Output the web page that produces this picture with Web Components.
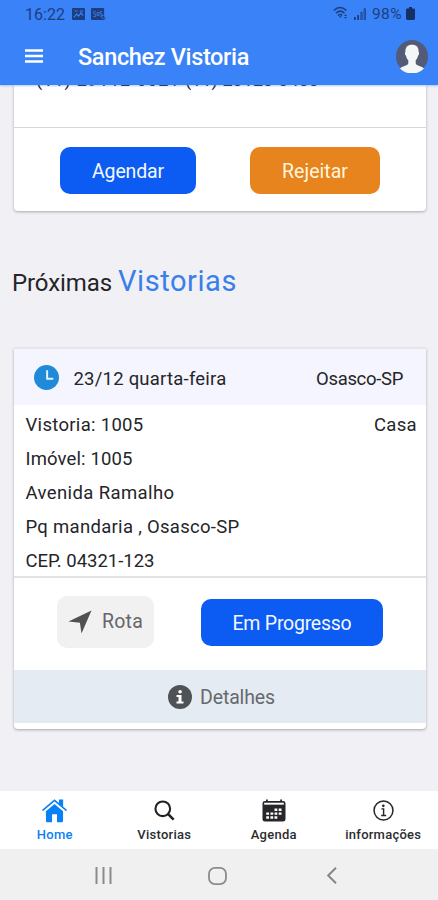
<!DOCTYPE html>
<html lang="pt-BR">
<head>
<meta charset="utf-8">
<title>Sanchez Vistoria</title>
<style>
html,body{margin:0;padding:0}
body{width:438px;height:900px;overflow:hidden;font-family:Roboto,"Liberation Sans",sans-serif;color:#252528;background:#f1f0f5}
</style>
</head>
<body>
<vistoria-app></vistoria-app>
<script>
const define = (name, html, after) => {
  const t = document.createElement('template');
  t.innerHTML = html;
  customElements.define(name, class extends HTMLElement {
    connectedCallback() {
      if (this.shadowRoot) return;
      this.attachShadow({ mode: 'open' }).append(t.content.cloneNode(true));
      if (after) after(this, this.shadowRoot);
    }
  });
};

/* A single line of text tracked out to a given width */
define('fit-text', `<style>
:host{display:block;white-space:pre;flex:none}
span{display:inline-block}
</style><span><slot></slot></span>`, (el, root) => {
  const s = root.querySelector('span');
  const w = parseFloat(el.getAttribute('w'));
  el.style.fontSize = el.getAttribute('size') + 'px';
  const natural = s.getBoundingClientRect().width;
  if (natural && w) s.style.letterSpacing = ((w - natural) / el.textContent.length).toFixed(3) + 'px';
  el.style.width = w + 'px';
});

const icons = {
  image: ['0 0 14 12', '<path fill="currentColor" d="M1 0h12q1 0 1 1v10q0 1-1 1H1q-1 0-1-1V1q0-1 1-1z"/><path d="M2 9.3l3-3.3 2.2 2 2.5-3.2L12 7.500M3 3h3M8.500 3H12" fill="none" stroke="#3982f7" stroke-width="1.200"/>'],
  sos: ['0 0 16 12', '<path fill="currentColor" d="M1 0h12q1 0 1 1v6.500l1.500 2.500-1.500 2H1q-1 0-1-1V1q0-1 1-1z"/><path d="M5 3.500H3V6h2v2.500H2.500M6.500 4.500h2v3h-2zM12 3.500h-2V6h2v2H9.500" fill="none" stroke="#3982f7" stroke-width=".8"/><circle cx="13" cy="9" r="1.700" fill="none" stroke="#3982f7" stroke-width=".6"/>'],
  wifi: ['0 0 16 14', '<path d="M.8 4.500Q7 -1.500 13.500 4.500M3 7.200Q7.200 3 11.500 7.200M5 9.500Q7.200 7.500 9.200 9.500" fill="none" stroke="currentColor" stroke-width="1.600"/><path d="M5.800 10.200h2.900l-1.400 1.700zM11 10l1.500-1.800L14 10zM11 11l1.500 1.800L14 11z" fill="currentColor"/>'],
  signal: ['0 0 12 12', '<path d="M0 9h1.800v3H0zM3.200 7H5v5H3.200z" fill="currentColor"/><path d="M6.900 4.300h1.200v7.200H6.900zM10.100 .8h1.300v10.700h-1.300z" fill="none" stroke="currentColor" stroke-width=".9"/>'],
  battery: ['0 0 9 14', '<path fill="currentColor" d="M3 0h3v1.500h1.200Q9 1.500 9 3v9.500q0 1.500-1.500 1.500h-6Q0 14 0 12.500V3q0-1.500 1.500-1.500H3z"/>'],
  menu: ['0 0 18 14', '<path d="M0 1.500h18M0 7h18M0 12.500h18" stroke="#fff" stroke-width="2.300"/>'],
  avatar: ['0 0 32 32', '<circle cx="16" cy="16" r="16" fill="#545b77"/><path fill="#f4f7f7" d="M16 4.500c4.800 0 6.800 2.800 6.600 7.200.9.500.6 3-.7 3.700-.4 2-1.200 3.300-2.200 4.300v3c.7 2.500 6.300 2.600 8.300 4.800C25 31 20.500 32.500 16 32.500S7 31 4 27.500c2-2.200 7.600-2.300 8.300-4.800v-3c-1-1-1.800-2.300-2.200-4.300-1.300-.7-1.600-3.200-.7-3.700C9.200 7.300 11.200 4.500 16 4.500z"/>'],
  clock: ['0 0 24 24', '<circle cx="12" cy="12" r="12" fill="#1f8ad8"/><path d="M12.600 5v8.200h5.900" fill="none" stroke="#e4f3ff" stroke-width="1.900"/>'],
  arrow: ['0 0 24 24', '<path fill="#505052" d="M23.500.5L13.500 23.500l-1.600-10.800L.5 11.500z"/>'],
  info: ['0 0 24 24', '<circle cx="12" cy="12" r="12" fill="#505356"/><circle cx="12.100" cy="6.800" r="1.800" fill="#fff"/><path fill="#fff" d="M8.500 10h5v6.500h2V18.500H8.500v-2h2V12h-2z"/>'],
  home: ['0 0 24 24', '<path fill="currentColor" d="M12 5.800l8.200 6.900V22q0 1.200-1.200 1.200h-4.600V15.500H9.600v7.700H5Q3.800 23.200 3.800 22v-9.300z"/><path d="M.9 11.600L12 2.200l11.100 9.400" fill="none" stroke="currentColor" stroke-width="1.500" stroke-linecap="round"/><path fill="currentColor" d="M16.300 1.500h4v7.500l-4-3.600z"/>'],
  search: ['0 0 22 22', '<circle cx="9.200" cy="9.200" r="7.700" fill="none" stroke="#222" stroke-width="2.200"/><path d="M14.800 14.800l5.800 5.800" stroke="#222" stroke-width="2.700"/>'],
  calendar: ['0 0 24 24', '<path fill="#27272a" d="M4 .5h1.800v2H4zM18.200 .5H20v2h-1.800zM3 2h18q2.500 0 2.500 2.500V21q0 2.500-2.500 2.500H3Q.5 23.500.5 21V4.500Q.5 2 3 2z"/><path d="M2.200 4.900h19.600" stroke="#fff" stroke-width="2"/><path fill="#fff" d="M12.500 10h2.800v2.600h-2.800zM16.700 10h2.800v2.600h-2.800zM4.200 14h2.800v2.500H4.200zM8.400 14h2.800v2.500H8.400zM12.500 14h2.800v2.500h-2.800zM16.700 14h2.800v2.500h-2.800zM4.200 18h2.800v2.500H4.200zM8.400 18h2.800v2.500H8.400zM12.500 18h2.800v2.500h-2.800z"/>'],
  about: ['0 0 22 22', '<circle cx="11" cy="11" r="9.900" fill="none" stroke="#28282b" stroke-width="1.600"/><circle cx="10.800" cy="6.100" r="1.400" fill="#28282b"/><path d="M8.800 9.300h2.300v6.800M8.500 16.300h5.300" fill="none" stroke="#28282b" stroke-width="1.500"/>'],
  recents: ['0 0 17 17', '<path d="M1.500 0v17M8.500 0v17M15.500 0v17" stroke="#8b8b8b" stroke-width="2"/>'],
  circle: ['0 0 19 19', '<rect x="1" y="1" width="17" height="17" rx="6" fill="none" stroke="#8b8b8b" stroke-width="1.800"/>'],
  back: ['0 0 10 17', '<path d="M9 .8L1.200 8.500 9 16.200" fill="none" stroke="#858585" stroke-width="1.900"/>']
};
define('app-icon', `<style>:host{display:block;flex:none}svg{display:block;width:100%;height:100%}</style>`, (el, root) => {
  const [box, body] = icons[el.getAttribute('name')];
  el.style.width = el.getAttribute('w') + 'px';
  el.style.height = el.getAttribute('h') + 'px';
  root.innerHTML += `<svg viewBox="${box}" preserveAspectRatio="none">${body}</svg>`;
});

define('status-bar', `<style>
:host{display:flex;box-sizing:border-box;height:28px;padding:0 23px 0 25px;align-items:center;background:#3982f7;color:#1d3f80;line-height:29px}
.gap{flex:1}
</style>
<fit-text w="40" size="16">16:22</fit-text>
<app-icon name="image" w="13" h="12" style="margin-left:7px"></app-icon>
<app-icon name="sos" w="15" h="12" style="margin-left:6px"></app-icon>
<span class="gap"></span>
<app-icon name="wifi" w="16" h="14" style="margin-right:5px;margin-top:-2px"></app-icon>
<app-icon name="signal" w="12" h="12" style="margin-right:6px"></app-icon>
<fit-text w="30" size="15.500">98%</fit-text>
<app-icon name="battery" w="9" h="13" style="margin-left:4px;margin-top:-2px;color:#172f66"></app-icon>`);

define('app-header', `<style>
:host{display:flex;box-sizing:border-box;height:57px;padding:0 10px 0 25px;align-items:center;background:#3982f7;color:#fff;line-height:55px;font-weight:500;position:relative;box-shadow:0 1px 2px #3982f766}
.gap{flex:1}
</style>
<app-icon name="menu" w="18" h="14" style="margin-top:-1px"></app-icon>
<fit-text w="171" size="23.500" style="margin-left:35px;padding-top:2px">Sanchez Vistoria</fit-text>
<span class="gap"></span>
<app-icon name="avatar" w="32" h="33" style="margin-top:-1px"></app-icon>`);

define('pill-button', `<style>
:host{display:flex;box-sizing:border-box;align-items:center;justify-content:center;border-radius:10px;background:#0c5bf3;color:#f3f8ff;height:47px;line-height:44px;flex:none}
:host([tone=warn]){background:#e7841d;color:#fff4de}
:host([tone=soft]){background:#f1f1f1;color:#666669;height:52px;gap:10px}
:host(:not([tone=soft])) ::slotted(fit-text){padding-top:3px}
</style><slot></slot>`);

define('inspection-card', `<style>
:host{display:block;margin:0 12px 0 14px;background:#fff;box-shadow:0 1px 3px #0000004d;border-radius:0 0 4px 4px;overflow:hidden}
</style><slot name="head"></slot><slot></slot><slot name="foot"></slot>`);

define('tab-item', `<style>
:host{display:flex;flex:1;flex-direction:column;align-items:center;padding-top:7px;box-sizing:border-box;line-height:20px;font-weight:500;color:#2c2c2f}
:host([active]){color:#0a80f5}
.i{display:flex;height:24px;align-items:center}
.l{margin-top:3px}
</style><div class="i"><slot name="icon"></slot></div><div class="l"><slot></slot></div>`);

define('tab-bar', `<style>
:host{display:flex;height:58px;background:#fff}
</style>
<tab-item active><app-icon slot="icon" name="home" w="25" h="25"></app-icon><fit-text w="36" size="13">Home</fit-text></tab-item>
<tab-item><app-icon slot="icon" name="search" w="21" h="21"></app-icon><fit-text w="54" size="13">Vistorias</fit-text></tab-item>
<tab-item><app-icon slot="icon" name="calendar" w="24" h="23"></app-icon><fit-text w="46" size="13">Agenda</fit-text></tab-item>
<tab-item><app-icon slot="icon" name="about" w="21" h="21"></app-icon><fit-text w="76" size="13">informações</fit-text></tab-item>`);

define('system-nav', `<style>
:host{display:flex;box-sizing:border-box;height:51px;padding:2px 101px 0 95px;align-items:center;background:#f0f0f0}
</style>
<app-icon name="recents" w="17" h="17"></app-icon>
<app-icon name="circle" w="19" h="18" style="margin-left:96px"></app-icon>
<app-icon name="back" w="10" h="17" style="margin-left:auto"></app-icon>`);

define('vistoria-app', `<style>
:host{display:flex;flex-direction:column;width:438px;height:900px}
main{flex:1;overflow:hidden;min-height:0}
.phones{display:flex;height:43px;box-sizing:border-box;padding-left:22px;border-bottom:1.500px solid #d8d8dc;line-height:24px}
.phones fit-text{margin-top:-17px}
.acts{display:flex;justify-content:space-between;padding:20px 46px 17px;height:83px;box-sizing:border-box}
h2{display:flex;align-items:baseline;margin:48px 0 0 12px;height:45px;line-height:44px;font-weight:400;gap:6px}
h2 .b{color:#397fe9}
.when{display:flex;align-items:center;height:57px;padding:2px 23px 0 20px;box-sizing:border-box;background:#f4f5fe;line-height:56px;border-top:1px solid #e5e5ea}
.when fit-text{padding-top:2px}
.when .city{margin-left:auto}
.body{height:173px;box-sizing:border-box;padding:3px 9px 0 11.500px;line-height:34px;border-bottom:2px solid #e2e2e4}
.row{display:flex;justify-content:space-between}
.go{display:flex;align-items:flex-start;padding:18px 43px 0;height:92px;box-sizing:border-box;justify-content:space-between}
.more{display:flex;align-items:center;justify-content:center;gap:8px;height:53px;background:#e5ebf2;color:#66696d;line-height:50px;margin-bottom:6px;padding-left:3px}
.more fit-text{padding-top:3px}
</style>
<status-bar></status-bar>
<app-header></app-header>
<main>
  <inspection-card>
    <div class="phones"><fit-text w="149" size="18">(11) 29112-0021 </fit-text><fit-text w="134" size="18">(11) 23123-3433</fit-text></div>
    <div class="acts">
      <pill-button style="width:136px;margin-top:-1px"><fit-text w="72" size="19.500">Agendar</fit-text></pill-button>
      <pill-button tone="warn" style="width:130px;margin-top:-1px"><fit-text w="66" size="19.500">Rejeitar</fit-text></pill-button>
    </div>
  </inspection-card>
  <h2><fit-text w="100" size="24">Próximas</fit-text><fit-text class="b" w="119" size="29">Vistorias</fit-text></h2>
  <inspection-card style="margin-top:44px">
    <div slot="head" class="when">
      <app-icon name="clock" w="25" h="25" style="margin-top:-1px"></app-icon>
      <fit-text w="153" size="18.500" style="margin-left:14.500px">23/12 quarta-feira</fit-text>
      <fit-text class="city" w="87" size="18.500">Osasco-SP</fit-text>
    </div>
    <div class="body">
      <div class="row"><fit-text w="118" size="18.500">Vistoria: 1005</fit-text><fit-text w="43" size="18.500">Casa</fit-text></div>
      <fit-text w="107" size="18.500">Imóvel: 1005</fit-text>
      <fit-text w="149" size="18.500">Avenida Ramalho</fit-text>
      <fit-text w="214" size="18.500">Pq mandaria , Osasco-SP</fit-text>
      <fit-text w="129" size="18.500">CEP. 04321-123</fit-text>
    </div>
    <div class="go">
      <pill-button tone="soft" style="width:97px"><app-icon name="arrow" w="24" h="24"></app-icon><fit-text w="41" size="19.500">Rota</fit-text></pill-button>
      <pill-button style="width:182px;margin-top:3px"><fit-text w="119" size="19.500">Em Progresso</fit-text></pill-button>
    </div>
    <div slot="foot" class="more"><app-icon name="info" w="24" h="24"></app-icon><fit-text w="75" size="19.500">Detalhes</fit-text></div>
  </inspection-card>
</main>
<tab-bar></tab-bar>
<system-nav></system-nav>`);
</script>
</body>
</html>
